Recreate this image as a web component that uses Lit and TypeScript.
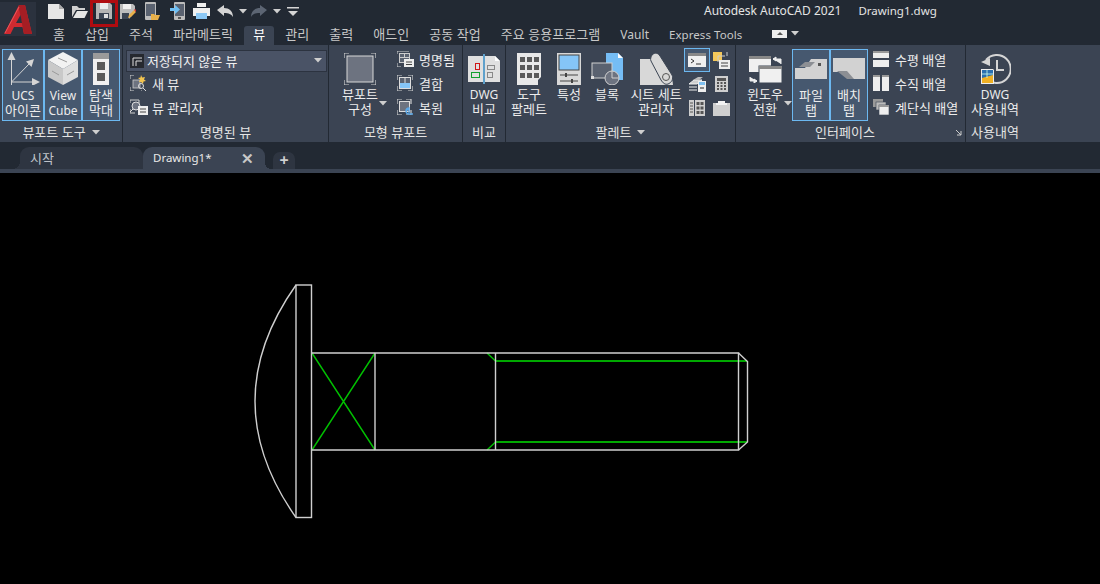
import { LitElement, html, css, svg } from "lit";
import { customElement } from "lit/decorators.js";

const ic = (w: number, h: number, body: unknown) =>
  html`<svg class="ic" width=${w} height=${h} viewBox="0 0 ${w} ${h}">${body}</svg>`;

const qa = {
  newf: ic(16, 16, svg`<path d="M0 1h11l5 5v10H0z" fill="#e6e6e6"/><path d="M11 1l5 5h-5z" fill="#a9a9a9"/>`),
  open: ic(16, 14, svg`<path d="M0 13V2h5l2 2h6v2H4L0 13z" fill="#cfcfcf"/><path d="M1 14l4-7h11l-3.500 7z" fill="#e6e6e6"/>`),
  save: ic(16, 16, svg`<path d="M0 0h14l2 2v14H0z" fill="#b4b4b4"/><path d="M4 0h8v6H4z" fill="#ececec"/><path d="M3 10h10v6H3z" fill="#3b4453"/><path d="M8 11h4v4H8z" fill="#e0e0e0"/>`),
  saveas: ic(16, 17, svg`<path d="M0 1h13l2 2v6l-6 7H0z" fill="#bdbdbd"/><path d="M3 1h8v5H3z" fill="#f0f0f0"/><path d="M2 10h7v6H2z" fill="#3b4453"/><path d="M8 15l1-3 5-5 2 2-5 5z" fill="#e8b04a"/><path d="M14 7l1-1 2 2-1 1z" fill="#d33"/>`),
  webOpen: ic(16, 18, svg`<rect x="0" y="0" width="11" height="18" rx="1" fill="#bdbdbd"/><rect x="1" y="2" width="9" height="12" fill="#5a6270"/><path d="M6 12h3l1 1h5l-2 5H6z" fill="#e8b04a"/>`),
  webSave: ic(16, 18, svg`<rect x="4" y="0" width="11" height="18" rx="1" fill="#bdbdbd"/><rect x="5" y="2" width="9" height="12" fill="#5a6270"/><path d="M0 6h5V3l5 4.500-5 4.500V9H0z" fill="#6fc0f5"/><rect x="8" y="15" width="3" height="2" fill="#555"/>`),
  print: ic(17, 16, svg`<path d="M4 0h9v4H4z" fill="#f0f0f0"/><path d="M0 5h17v8h-3v-2H3v2H0z" fill="#f0f0f0"/><path d="M3 10h11v6H3z" fill="#8cc8f5"/>`),
  undo: ic(16, 12, svg`<path d="M0 5l7-5v3c5 0 9 3 9 9-2-3-4-4-9-4v3z" fill="#d5d5d5"/>`),
  redo: ic(16, 12, svg`<path d="M16 5l-7-5v3c-5 0-9 3-9 9 2-3 4-4 9-4v3z" fill="#5c6573"/>`),
  arrow: ic(8, 5, svg`<path d="M0 0h8l-4 4.500z" fill="#cfcfcf"/>`),
  menu: ic(12, 9, svg`<path d="M0 0h12v1.500H0z" fill="#d5d5d5"/><path d="M1 4h10l-5 5z" fill="#d5d5d5"/>`),
};

const corners = (w: number, h: number) => svg`<path d="M0 5V0h5M${w - 5} 0h5v5M${w} ${h - 5}v5h-5M5 ${h}H0v-5" fill="none" stroke="#d0d0d0" stroke-width="1.200"/>`;

const lg = {
  ucs: ic(34, 33, svg`<path d="M5.500 33V6M5 30L29 30M5.500 30L24 11" stroke="#d5d5d5" stroke-width="1" fill="none"/><path d="M5.500 0l4 8h-8z" fill="#d5d5d5"/><path d="M34 30l-8 4v-8z" fill="#d5d5d5"/><path d="M28 7l-2.500 8-5.500-5.500z" fill="#d5d5d5"/>`),
  cube: ic(30, 33, svg`<path d="M15 0l15 8-15 9L0 8z" fill="#f2f2f2"/><path d="M0 8l15 9v16L0 25z" fill="#c9c9c9"/><path d="M30 8l-15 9v16l15-8z" fill="#dedede"/><path d="M10 6l9 4M4 19l7 4M19 23l7-4" stroke="#9a9a9a" stroke-width="1"/>`),
  nav: ic(16, 32, svg`<rect width="16" height="32" fill="#f0f0f0"/><rect width="16" height="6" fill="#9a9a9a"/><rect x="4" y="9" width="8" height="8" fill="#5a5a5a"/><rect x="4" y="20" width="8" height="8" fill="#5a5a5a"/>`),
  vp: ic(32, 32, svg`${corners(32, 32)}<rect x="3" y="3" width="26" height="26" fill="#6d7380" stroke="#d8d8d8" stroke-width="1"/>`),
  dwg: ic(32, 30, svg`<path d="M0 2h15v26H0z" fill="#e0e0e0"/><path d="M17 2h10l5 5v21H17z" fill="#e0e0e0"/><path d="M27 2l5 5h-5z" fill="#fff"/><path d="M16 0v30" stroke="#6cc0f5" stroke-width="1.500"/><rect x="7.500" y="9.500" width="4" height="6" fill="none" stroke="#d01818"/><rect x="3.500" y="18.500" width="8" height="5" fill="none" stroke="#10a030"/><rect x="19.500" y="11.500" width="7" height="4" fill="none" stroke="#888"/><rect x="19.500" y="18.500" width="5" height="5" fill="none" stroke="#888"/>`),
  tool: ic(24, 32, svg`<path d="M0 0h24v24l-3 3v5H0z" fill="#e8e8e8"/><g fill="#5a5a5a"><rect x="3" y="4" width="5" height="5"/><rect x="10" y="4" width="5" height="5"/><rect x="17" y="4" width="5" height="5"/><rect x="3" y="12" width="5" height="5"/><rect x="10" y="12" width="5" height="5"/><rect x="17" y="12" width="5" height="5"/><rect x="3" y="20" width="5" height="5"/><rect x="10" y="20" width="5" height="5"/><rect x="17" y="20" width="5" height="5"/></g>`),
  prop: ic(24, 32, svg`<rect width="24" height="32" fill="#d8d8d8"/><rect x="2" y="2" width="20" height="15" fill="#85c5f7" stroke="#444" stroke-width="1"/><path d="M3 22h18M3 28h18" stroke="#444"/><path d="M9 20v4M15 26v4" stroke="#444" stroke-width="2"/>`),
  block: ic(32, 32, svg`<path d="M15 0h12l5 5v22H15z" fill="#75bdf5"/><path d="M27 0l5 5h-5z" fill="#fff"/><rect x="1" y="10" width="20" height="15" fill="#5a6270" stroke="#d0d0d0"/><circle cx="21" cy="25" r="7" fill="#6d7380" stroke="#d0d0d0"/><path d="M21 18v7h7" stroke="#d0d0d0" fill="none"/><rect x="0" y="23" width="3" height="3" fill="#ddd"/>`),
  sheet: ic(33, 32, svg`<path d="M0 6h19l6 12c2 4 8 5 8 14H0z" fill="#d8d8d8"/><path d="M12 2c3-3 6-2 8 1l12 19c2 4-1 8-4 9-3 1-5-1-7-4L11 8c-1-2 0-4 1-6z" fill="#d8d8d8" stroke="#3b4453"/><circle cx="26" cy="24" r="3.500" fill="none" stroke="#555"/>`),
  win: ic(33, 28, svg`<rect x="0" y="1" width="22" height="16" fill="#f0f0f0"/><rect x="0" y="1" width="22" height="3" fill="#888"/><rect x="10" y="11" width="23" height="17" fill="#f0f0f0" stroke="#3b4453"/><rect x="10" y="11" width="23" height="3" fill="#888"/><path d="M24 4h8v5M24 4l3-2v4z" stroke="#eee" fill="#eee" stroke-width="1"/><path d="M1 22v4h7M8 26l-3-2v4z" stroke="#eee" fill="#eee" stroke-width="1"/>`),
  fileTab: ic(32, 21, svg`<path d="M0 10l10 0 6-9h16v20H0z" fill="#d2d2d2"/><path d="M4 9l6-5h10l-5 5z" fill="#8c8f94"/><rect x="23" y="5" width="3" height="3" fill="#555"/>`),
  layTab: ic(32, 21, svg`<path d="M0 0h32v21H16l-6-7H0z" fill="#d2d2d2"/><path d="M4 13h10l7 8H14z" fill="#8c8f94"/>`),
  hist: ic(31, 30, svg`<path d="M5 7a14 14 0 1 1 0 18" transform="translate(1 -1)" fill="none" stroke="#d5d5d5" stroke-width="2"/><path d="M0 9l9-4 0 8z" fill="#d5d5d5" transform="translate(1 -1)"/><path d="M17 6v10h7" fill="none" stroke="#d5d5d5" stroke-width="2"/><path d="M1 15h12l1 1v14H1z" fill="#eee"/><path d="M2 16h11v8l-11 0z" fill="#2a6fb0"/><path d="M2 24l11-3v8H2z" fill="#efb024"/><path d="M2 20h11M7 16v8" stroke="#cfe" stroke-width=".8"/>`),
};

const sm = {
  addView: ic(16, 16, svg`<path d="M0 4V0h4M0 12v4h4M12 16h-1" fill="none" stroke="#d0d0d0"/><rect x="3" y="5" width="7" height="8" fill="#6d7380" stroke="#ccc" stroke-width=".8"/><path d="M11 0l1.200 2.500L15 2l-1 2.500L16 6l-2.500.500L13 9l-2-2-2 0 1-2.500L8 3l2.500-.500z" fill="#f2c450"/><circle cx="11" cy="11" r="2.500" fill="none" stroke="#ddd"/><path d="M13 13l3 3" stroke="#ddd"/>`),
  mgr: ic(18, 16, svg`<path d="M0 4V1h9v3M0 10v4h5" fill="none" stroke="#d0d0d0"/><circle cx="6" cy="7" r="4" fill="#6d7380" stroke="#ddd"/><path d="M3 10l-3 3" stroke="#ddd"/><rect x="8" y="7" width="10" height="9" fill="#eee"/><path d="M10 10h6M10 13h6" stroke="#444"/>`),
  named: ic(17, 16, svg`<path d="M0 3V0h12M0 12v4h4" fill="none" stroke="#d0d0d0"/><rect x="2.500" y="2.500" width="10" height="9" fill="#5a6270" stroke="#ccc"/><path d="M7.500 2.500v4M2.500 6.500h10" stroke="#ccc"/><rect x="7" y="8" width="10" height="8" fill="#eee"/><path d="M9 11h6M9 13.500h6" stroke="#444"/>`),
  join: ic(16, 16, svg`${corners(16, 16)}<rect x="2.500" y="2.500" width="11" height="11" fill="#5a6270" stroke="#ddd"/><rect x="3" y="8" width="10" height="5" fill="#85c5f7"/><path d="M8 2.500v5.500" stroke="#ddd"/>`),
  restore: ic(17, 16, svg`${corners(14, 16)}<rect x="2.500" y="2.500" width="10" height="10" fill="#6d7380" stroke="#ddd"/><path d="M16 15h-4a3 3 0 0 1 0-6M9 12l3-3 0 5" fill="none" stroke="#5ba8e8" stroke-width="1.300"/>`),
  cmd: ic(18, 14, svg`<rect width="18" height="14" fill="#f0f0f0"/><rect width="18" height="3" fill="#888"/><path d="M3 6l3 2-3 2" fill="none" stroke="#333"/><path d="M8 11h5" stroke="#333"/>`),
  note: ic(17, 17, svg`<rect x="0" y="0" width="9" height="9" fill="#f5c85a"/><path d="M5 10V4h7M14 0v4" stroke="#ccc" fill="none"/><rect x="6" y="8" width="11" height="9" fill="#eee"/><path d="M8 11h7M8 14h7" stroke="#444"/>`),
  stack: ic(17, 16, svg`<path d="M0 8h8l5-4H5zM0 11h8M0 14h8" stroke="#eee" fill="#cfcfcf"/><path d="M4 4l5-3h5l-4 3z" fill="#bbb"/><rect x="9" y="5" width="8" height="11" fill="#eee"/><rect x="10" y="6" width="6" height="3" fill="#7fc0f0"/><path d="M11 12h4" stroke="#222"/>`),
  calc: ic(13, 16, svg`<rect width="13" height="16" fill="#cfcfcf"/><rect x="2" y="2" width="9" height="3" fill="#555"/><g fill="#555"><rect x="2" y="6" width="2" height="2"/><rect x="5.500" y="6" width="2" height="2"/><rect x="9" y="6" width="2" height="2"/><rect x="2" y="9" width="2" height="2"/><rect x="5.500" y="9" width="2" height="2"/><rect x="9" y="9" width="2" height="2"/><rect x="2" y="12" width="2" height="2"/><rect x="5.500" y="12" width="2" height="2"/><rect x="9" y="12" width="2" height="2"/></g>`),
  grid: ic(16, 16, svg`<rect width="5" height="16" fill="#cfcfcf"/><rect x="6" width="10" height="16" fill="#cfcfcf"/><path d="M1 3h3M1 6h3M1 9h3M1 12h3" stroke="#555"/><g fill="#555"><rect x="7.500" y="2" width="3" height="3"/><rect x="11.500" y="2" width="3" height="3"/><rect x="7.500" y="6.500" width="3" height="3"/><rect x="11.500" y="6.500" width="3" height="3"/><rect x="7.500" y="11" width="3" height="3"/><rect x="11.500" y="11" width="3" height="3"/></g>`),
  clip: ic(17, 16, svg`<path d="M0 3h17v13H0z" fill="#cfcfcf"/><path d="M5 3h7V1H5z" fill="#f2f2f2"/><path d="M3 3h11v2H3z" fill="#f2f2f2"/>`),
  horiz: ic(16, 16, svg`<rect width="16" height="7" fill="#eee"/><rect y="9" width="16" height="7" fill="#eee"/><rect width="16" height="2" fill="#999"/>`),
  vert: ic(16, 16, svg`<rect width="7" height="16" fill="#eee"/><rect x="9" width="7" height="16" fill="#eee"/><rect width="7" height="2" fill="#999"/><rect x="9" width="7" height="2" fill="#999"/>`),
  casc: ic(16, 16, svg`<rect width="10" height="8" fill="#999"/><rect x="3" y="3" width="10" height="8" fill="#bbb" stroke="#3b4453" stroke-width=".6"/><rect x="6" y="6" width="10" height="10" fill="#eee" stroke="#3b4453" stroke-width=".6"/><rect x="6" y="6" width="10" height="2" fill="#999"/>`),
  combo: ic(14, 14, svg`<rect width="14" height="14" fill="#26292f"/><path d="M3 12V4h9M6 12V7h6" fill="none" stroke="#ddd"/>`),
};

const tx = (s: string) => (/^[\x00-\x7f]+$/.test(s) ? html`<span class="la">${s}</span>` : s);

@customElement("app-root")
export class AppRoot extends LitElement {
  static styles = css`
    :host { display: block; width: 1100px; height: 584px; overflow: hidden; background: #000;
      font-family: "Noto Sans", "Noto Sans CJK KR", sans-serif; font-size: 13px; color: #e8e8e8; }
    .la { font-size: 12px; }
    .nar { font-size: 11.5px; }
    .ic { display: block; flex: none; }
    .top { height: 45px; background: #222933; display: flex; flex-direction: column; position: relative; }
    .logo { position: absolute; left: 0; top: 2px; width: 36px; height: 34px; background: #2b323e; display: flex; align-items: center; justify-content: center; }
    .qrow { height: 22px; display: flex; align-items: center; padding-left: 48px; flex: none; }
    .qa { display: flex; align-items: center; height: 22px; }
    .qa.save { position: relative; }
    .redframe { position: absolute; left: -6px; top: 0; width: 22px; height: 21px; border: 3px solid #b00c10; }
    .title { position: absolute; left: 704px; top: 2px; height: 18px; line-height: 18px; display: flex; gap: 17px; color: #e4e4e4; white-space: nowrap; font-size: 12px; }
    .tabs { height: 23px; display: flex; align-items: stretch; padding-left: 43px; color: #c8c8c8; letter-spacing: 0.05px; }
    .tab { padding: 4px 10px 0; line-height: 16px; white-space: nowrap; }
    .tab.on { background: #3b4453; color: #fff; margin-top: 4px; padding-top: 0; border-radius: 3px 3px 0 0; padding-left: 9px; padding-right: 9px; margin-left: 1px; margin-right: 1px; }
    .wgt { display: flex; align-items: center; gap: 4px; margin-left: 20px; }
    .wgtbox { width: 15px; height: 8px; background: #eee; display: flex; align-items: center; justify-content: center; }
    .wgtbox i { border: 3px solid transparent; border-top: 0; border-bottom: 3px solid #555; }
    .ribbon { height: 97px; background: #3b4453; display: flex; }
    .panel { display: flex; flex-direction: column; border-right: 1px solid #222933; flex: none; box-sizing: border-box; }
    .body { height: 78px; display: flex; align-items: flex-start; }
    .cap { height: 19px; line-height: 17px; text-align: center; display: flex; justify-content: center; align-items: center; gap: 6px; color: #e4e4e4; position: relative; }
    .cap.shift { padding-right: 11px; }
    .cap .corner { position: absolute; right: 3px; top: 6px; }
    .big { display: flex; flex-direction: column; align-items: center; flex: none; position: relative; height: 78px; padding-top: 7px; box-sizing: border-box; }
    .big .imgbox { height: 33px; display: flex; align-items: center; justify-content: center; }
    .big .lbl { margin-top: 2px; text-align: center; line-height: 15px; white-space: nowrap; color: #ececec; }
    .big.on { background: #46586f; outline: 1px solid #6cb8f0; outline-offset: -1px; height: 72px; margin-top: 4px; padding-top: 3px; }
    .big.on .lbl { margin-top: 3px; }
    .dd { position: absolute; }
    .col { display: flex; flex-direction: column; }
    .srow { display: flex; align-items: center; gap: 6px; height: 24px; white-space: nowrap; color: #ececec; }
    .icw { width: 16px; display: flex; justify-content: center; }
    .combo { height: 19px; padding-bottom: 1px; margin: 5px 0 0 3px; background: #4a5366; border: 1px solid #2c3340; display: flex; align-items: center; padding-left: 3px; gap: 3px; width: 196px; color: #f0f0f0; }
    .combo .sp { flex: 1; }
    .combo .ic:last-child { margin-right: 4px; }
    .sel { outline: 1px solid #6cb8f0; background: #46586f; padding: 4px 3px; }
    .gridrow { display: flex; align-items: center; height: 24px; }
    .cell { width: 24px; display: flex; justify-content: center; }
    .tabbar { height: 27px; background: #222933; display: flex; align-items: flex-end; padding-left: 20px; }
    .dt { height: 22px; width: 123px; box-sizing: border-box; line-height: 22px; border-radius: 9px 9px 0 0; padding-left: 10px; background: #2e3541; color: #bfc3c9; flex: none; display: flex; align-items: center; position: relative; }
    .dt::before { content: ""; position: absolute; left: -8px; bottom: 0; width: 8px; height: 8px; background: radial-gradient(circle at 0 0, transparent 8px, #2e3541 8px); }
    .dt.on { width: 122px; background: #3b4453; color: #e8e8e8; justify-content: space-between; padding-right: 11px; }
    .dt.on::before { display: none; }
    .dt.on::after { content: ""; position: absolute; right: -6px; bottom: 0; width: 6px; height: 6px; background: radial-gradient(circle at 100% 0, transparent 6px, #3b4453 6px); }
    .x { color: #c8c8c8; font-size: 15px; font-weight: 700; }
    .plus { margin-left: 8px; width: 22px; height: 17px; border-radius: 7px 7px 0 0; background: #2e3541; color: #d0d0d0; font-size: 16px; font-weight: 700; line-height: 17px; text-align: center; }
    .strip { height: 4px; background: #3b4453; }
    .canvas { display: block; background: #000; }
    .w123 { width: 123px; } .w206 { width: 206px; } .w134 { width: 134px; } .w43 { width: 43px; } .w230 { width: 230px; }
    .pl2 { padding-left: 2px; } .pl3 { padding-left: 3px; }
    .last { flex: 1; border-right: 0; }
    .h78 { height: 78px; }
    .mini { margin-left: 7px; margin-top: -1px; }
    .tight { margin-left: -2px; }
    .gridcol { margin-left: -2px; padding-top: 3px; }
    .rows { padding-top: 2px; }
    .w58 { width: 58px; }
  `;

  big(icon: unknown, lines: string[], w: number, opt: { on?: boolean; arrow?: [number, number] } = {}) {
    return html`<div class="big ${opt.on ? "on" : ""}" style="width:${w}px">
      <div class="imgbox">${icon}</div>
      <div class="lbl">${lines.map((l) => html`<div>${tx(l)}</div>`)}</div>
      ${opt.arrow ? html`<div class="dd" style="left:${opt.arrow[0]}px;top:${opt.arrow[1]}px">${qa.arrow}</div>` : ""}
    </div>`;
  }

  srows(rows: [unknown, string][], left: number) {
    return html`<div class="col rows" style="margin-left:${left}px">
      ${rows.map(([i, t]) => html`<div class="srow"><span class="icw">${i}</span><span>${t}</span></div>`)}
    </div>`;
  }

  render() {
    const tabs = ["홈", "삽입", "주석", "파라메트릭", "뷰", "관리", "출력", "애드인", "공동 작업", "주요 응용프로그램", "Vault", "Express Tools"];
    return html`
      <div class="top">
        <div class="logo">
          <svg width="28" height="29" viewBox="0 0 28 29">
            <path d="M0 29L15 0h6l7 29h-8l-1.500-7H10l-3.500 7z" fill="#cf2a30"/>
            <path d="M15 0h6l7 29h-8L15 4z" fill="#a51e24"/>
            <path d="M12 18h6l-1.500-8z" fill="#2b323e"/>
            <path d="M1 28L15 2" stroke="#e8555a" stroke-width="1" fill="none"/>
          </svg>
        </div>
        <div class="qrow">
          <div class="qa">${qa.newf}</div>
          <div class="qa" style="margin-left:8px">${qa.open}</div>
          <div class="qa save" style="margin-left:8px">${qa.save}<div class="redframe"></div></div>
          <div class="qa" style="margin-left:8px">${qa.saveas}</div>
          <div class="qa" style="margin-left:9px">${qa.webOpen}</div>
          <div class="qa" style="margin-left:9px">${qa.webSave}</div>
          <div class="qa" style="margin-left:7px">${qa.print}</div>
          <div class="qa" style="margin-left:7px">${qa.undo}</div>
          <div class="qa" style="margin-left:6px">${qa.arrow}</div>
          <div class="qa" style="margin-left:4px">${qa.redo}</div>
          <div class="qa" style="margin-left:6px">${qa.arrow}</div>
          <div class="qa" style="margin-left:6px">${qa.menu}</div>
        </div>
        <div class="title"><span>Autodesk AutoCAD 2021</span><span class="nar">Drawing1.dwg</span></div>
        <div class="tabs">
          ${tabs.map((t) => html`<div class="tab ${t === "뷰" ? "on" : ""}">${t === "Express Tools" ? html`<span class="nar">${t}</span>` : tx(t)}</div>`)}
          <div class="wgt"><div class="wgtbox"><i></i></div>${qa.arrow}</div>
        </div>
      </div>

      <div class="ribbon">
        <div class="panel w123">
          <div class="body pl2">
            ${this.big(lg.ucs, ["UCS", "아이콘"], 42, { on: true })}
            ${this.big(lg.cube, ["View", "Cube"], 38, { on: true })}
            ${this.big(lg.nav, ["탐색", "막대"], 38, { on: true })}
          </div>
          <div class="cap">뷰포트 도구 ${qa.arrow}</div>
        </div>

        <div class="panel w206">
          <div class="col h78">
            <div class="combo">${sm.combo}<span>저장되지 않은 뷰</span><span class="sp"></span>${qa.arrow}</div>
            <div class="mini">
              <div class="srow">${sm.addView}<span>새 뷰</span></div>
              <div class="srow">${sm.mgr}<span class="tight">뷰 관리자</span></div>
            </div>
          </div>
          <div class="cap">명명된 뷰</div>
        </div>

        <div class="panel w134">
          <div class="body">
            ${this.big(lg.vp, ["뷰포트", "구성"], 62, { arrow: [50, 56] })}
            ${this.srows([[sm.named, "명명됨"], [sm.join, "결합"], [sm.restore, "복원"]], 6)}
          </div>
          <div class="cap">모형 뷰포트</div>
        </div>

        <div class="panel w43">
          <div class="body">${this.big(lg.dwg, ["DWG", "비교"], 42)}</div>
          <div class="cap">비교</div>
        </div>

        <div class="panel w230">
          <div class="body pl3">
            ${this.big(lg.tool, ["도구", "팔레트"], 40)}
            ${this.big(lg.prop, ["특성"], 40)}
            ${this.big(lg.block, ["블록"], 36)}
            ${this.big(lg.sheet, ["시트 세트", "관리자"], 62)}
            <div class="col gridcol">
              <div class="gridrow"><div class="cell"><div class="sel">${sm.cmd}</div></div><div class="cell">${sm.note}</div></div>
              <div class="gridrow"><div class="cell">${sm.stack}</div><div class="cell">${sm.calc}</div></div>
              <div class="gridrow"><div class="cell">${sm.grid}</div><div class="cell">${sm.clip}</div></div>
            </div>
          </div>
          <div class="cap">팔레트 ${qa.arrow}</div>
        </div>

        <div class="panel w230">
          <div class="body pl2">
            ${this.big(lg.win, ["윈도우", "전환"], 54, { arrow: [46, 56] })}
            ${this.big(lg.fileTab, ["파일", "탭"], 38, { on: true })}
            ${this.big(lg.layTab, ["배치", "탭"], 38, { on: true })}
            ${this.srows([[sm.horiz, "수평 배열"], [sm.vert, "수직 배열"], [sm.casc, "계단식 배열"]], 5)}
          </div>
          <div class="cap shift">인터페이스
            <svg class="corner ic" width="7" height="7" viewBox="0 0 7 7"><path d="M1 1l5 5M6 2v4H2" stroke="#ccc" fill="none"/></svg>
          </div>
        </div>

        <div class="panel last">
          <div class="body">${this.big(lg.hist, ["DWG", "사용내역"], 58)}</div>
          <div class="cap w58">사용내역</div>
        </div>
      </div>

      <div class="tabbar">
        <div class="dt">시작</div>
        <div class="dt on"><span class="nar">Drawing1*</span><span class="x">✕</span></div>
        <div class="plus">+</div>
      </div>
      <div class="strip"></div>

      <svg class="canvas" width="1100" height="411" viewBox="0 173 1100 411">
        <g fill="none" stroke-width="1.400">
          <g stroke="#00c000">
            <path d="M312 353L375 450M375 353L312 450"/>
            <path d="M487 353L495.500 361M487 450L495.500 442"/>
          </g>
          <path d="M495.500 361H747M495.500 442H747" stroke="#00a800" stroke-width="1.800"/>
          <g stroke="#cfcfcf">
            <path d="M296 285Q214 401 296 517.500" />
            <rect x="296" y="285" width="15.500" height="232.500"/>
            <path d="M311.500 353H738.500V450H311.500"/>
            <path d="M375 353V450M495.500 353V450"/>
            <path d="M738.500 353L747.500 361.500V442L738.500 450"/>
          </g>
        </g>
      </svg>
    `;
  }
}
